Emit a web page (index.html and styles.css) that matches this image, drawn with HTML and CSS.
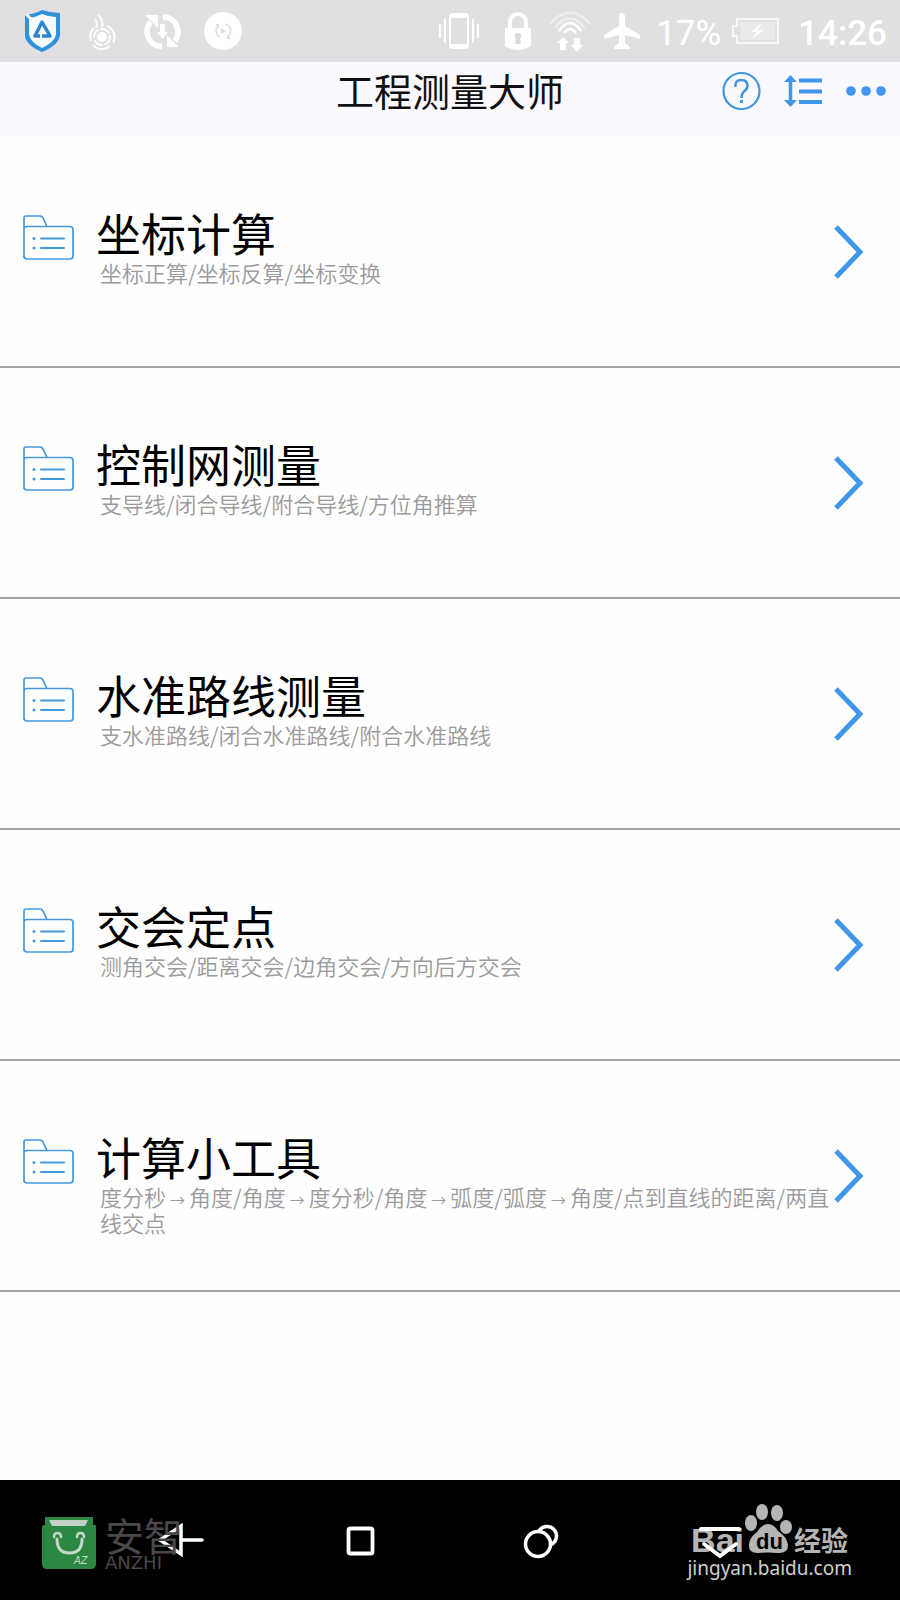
FILE: index.html
```html
<!DOCTYPE html>
<html lang="zh-CN">
<head>
  <meta charset="UTF-8">
  <meta name="viewport" content="width=device-width, initial-scale=1">
  <title>工程测量大师</title>
  <link rel="stylesheet" href="styles.css">
</head>
<body>
  <!-- shared icons -->
  <svg class="sprite" aria-hidden="true">
    <symbol id="folder" viewBox="0 0 52 46">
      <path d="M2 43V3q0-2 2-2h14q2 0 3 2l4 8.500H48q3 0 3 3V41q0 3-3 3H5q-3 0-3-3V14q0-2.500 3-2.500h20" fill="none" stroke="#4598dc" stroke-width="1.700"/>
      <path d="M19 23.500h23M19 33h23" stroke="#4598dc" stroke-width="2" stroke-linecap="round"/>
      <circle cx="12" cy="23.500" r="1.500" fill="#4598dc"/>
      <circle cx="12" cy="33" r="1.500" fill="#4598dc"/>
    </symbol>
    <symbol id="arrow" viewBox="0 0 30 54">
      <path d="M2 2L26 27L2 52" fill="none" stroke="#4096e8" stroke-width="5"/>
    </symbol>
  </svg>

  <div class="status-bar">
    <div class="status-left">
      <svg width="60" height="62" viewBox="0 0 60 62">
        <path d="M13 15Q23 14 30 10Q39 13 48 13V35Q47 45 30 52Q14 45 13 36Z" fill="#2f92dc"/>
        <path d="M17 18Q24 17 30 14Q37 17 44 17V34Q43 42 30 48Q18 42 17 34Z" fill="#f5fbff"/>
        <path d="M14 14l6 6" stroke="#f5fbff" stroke-width="3"/>
        <path d="M28 36H23L30 22L38 36H30" fill="none" stroke="#2f86cd" stroke-width="3.500" stroke-linejoin="round"/>
      </svg>
      <svg width="60" height="62" viewBox="0 0 60 62" fill="none" stroke="#fff" stroke-width="1.800">
        <circle cx="30" cy="37" r="4" fill="#fff"/>
        <circle cx="30" cy="37" r="8" stroke-dasharray="10 2"/>
        <path d="M22 28A12 12 0 0 0 19 41M21 45A12 12 0 0 0 38 46M41 43A12 12 0 0 0 35 26"/>
        <path d="M26 15Q32 20 30 27M23 19Q26 24 24 28"/>
      </svg>
      <svg width="60" height="62" viewBox="0 0 60 62" fill="none" stroke="#fff">
        <path d="M18.500 22A15 15 0 0 0 30 46.500M31 17A15 15 0 0 1 43 41" stroke-width="5.500"/>
        <path d="M13 15h13v13zM35 47V35l12 12z" fill="#fff" stroke="none"/>
        <path d="M30.500 24v9" stroke-width="5"/>
        <path d="M25 32h11l-5.500 7z" fill="#fff" stroke="none"/>
      </svg>
      <svg width="60" height="62" viewBox="0 0 60 62">
        <circle cx="31" cy="31" r="19" fill="#fff"/>
        <path d="M27 25A7 7 0 0 0 28 37M33 24A7 7 0 0 1 35 37" fill="none" stroke="#dedcdf" stroke-width="1.500"/>
        <path d="M29 28l5 3l-5 3zM23 24h4v4zM35 35v4h4z" fill="#dedcdf"/>
      </svg>
    </div>
    <div class="status-right">
      <svg width="44" height="62" viewBox="1 0 44 62" fill="none" stroke="#fff">
        <rect x="13" y="14" width="18" height="34" rx="3" stroke-width="2"/>
        <path d="M14 16h16M14 46h16" stroke-width="4"/>
        <path d="M3 24v14M8 19v24M36 19v24M41 24v14" stroke-width="2"/>
      </svg>
      <svg width="44" height="62" viewBox="0 0 44 62">
        <path d="M17 30V22a8 8 0 0 1 16 0v8" fill="none" stroke="#fff" stroke-width="4"/>
        <path d="M12 28h26v18q-13 8-26 0z" fill="#fff"/>
        <path d="M25 33a3 3 0 0 1 2 5.500l1 5.500h-6l1-5.500A3 3 0 0 1 25 33z" fill="#dcdadd"/>
      </svg>
      <svg width="44" height="62" viewBox="0 0 44 62" fill="none" stroke="#fff">
        <path d="M2 24Q22 1 42 24M7 28Q22 9 37 28" stroke-width="2.500" opacity=".45"/>
        <path d="M11 31Q22 15 33 31M16 33Q22 25 28 33" stroke-width="2.500"/>
        <path d="M15 37l6 6h-3v7h-6v-7H9zM29 52l-6-7h3v-7h6v7h3z" fill="#fff" stroke="none"/>
      </svg>
      <svg width="38" height="62" viewBox="0 0 38 62">
        <path d="M19 13q3 0 3 4v9l15 9v4l-15-4v8l5 4v2H11v-2l5-4v-8L1 39v-4l15-9v-9q0-4 3-4z" fill="#fff"/>
      </svg>
      <span class="battery-text">17%</span>
      <svg width="47" height="62" viewBox="1 0 47 62">
        <path d="M6 19H47V43H6V36H2V26H6Z" fill="none" stroke="#fff" stroke-width="1.500"/>
        <rect x="9" y="22" width="35" height="18" fill="#ebe9ec"/>
        <path d="M30 23L20 32h6l-5 7L33 30h-6z" fill="#fff"/>
      </svg>
      <span class="clock">14:26</span>
    </div>
  </div>

  <header class="header">
    <h1>工程测量大师</h1>
    <div class="actions">
      <button type="button" aria-label="帮助">
        <svg width="40" height="40" viewBox="0 0 40 40" fill="none" stroke="#4096e0">
          <circle cx="19.500" cy="20" r="18" stroke-width="2.200"/>
          <path d="M13.500 16Q12.500 9 19.500 9Q25.500 9 25.500 15Q25.500 18 21.500 21Q19.500 23 19.500 27" stroke-width="2.500"/>
          <path d="M19.500 29v3" stroke-width="3"/>
        </svg>
      </button>
      <button type="button" aria-label="排序">
        <svg width="40" height="40" viewBox="0 0 40 40">
          <path d="M6.500 8v24" stroke="#4096e8" stroke-width="3.500"/>
          <path d="M6.500 4l6.500 7H0zM6.500 36l6.500-7H0z" fill="#4096e8"/>
          <path d="M15 9.500h23M15 20.500h23M15 31h23" stroke="#4096e8" stroke-width="4"/>
        </svg>
      </button>
      <button type="button" aria-label="更多">
        <svg width="40" height="40" viewBox="0 0 40 40" fill="#4096f0">
          <circle cx="5" cy="20" r="4.800"/>
          <circle cx="20" cy="20" r="4.800"/>
          <circle cx="35" cy="20" r="4.800"/>
        </svg>
      </button>
    </div>
  </header>

  <main class="list">
    <a class="item" href="#zuobiao">
      <svg class="folder"><use href="#folder"/></svg>
      <div class="text">
        <h2>坐标计算</h2>
        <p>坐标正算/坐标反算/坐标变换</p>
      </div>
      <svg class="arrow"><use href="#arrow"/></svg>
    </a>
    <a class="item" href="#kongzhi">
      <svg class="folder"><use href="#folder"/></svg>
      <div class="text">
        <h2>控制网测量</h2>
        <p>支导线/闭合导线/附合导线/方位角推算</p>
      </div>
      <svg class="arrow"><use href="#arrow"/></svg>
    </a>
    <a class="item" href="#shuizhun">
      <svg class="folder"><use href="#folder"/></svg>
      <div class="text">
        <h2>水准路线测量</h2>
        <p>支水准路线/闭合水准路线/附合水准路线</p>
      </div>
      <svg class="arrow"><use href="#arrow"/></svg>
    </a>
    <a class="item" href="#jiaohui">
      <svg class="folder"><use href="#folder"/></svg>
      <div class="text">
        <h2>交会定点</h2>
        <p>测角交会/距离交会/边角交会/方向后方交会</p>
      </div>
      <svg class="arrow"><use href="#arrow"/></svg>
    </a>
    <a class="item" href="#gongju">
      <svg class="folder"><use href="#folder"/></svg>
      <div class="text">
        <h2>计算小工具</h2>
        <p>度分秒<span class="to">→</span>角度/角度<span class="to">→</span>度分秒/角度<span class="to">→</span>弧度/弧度<span class="to">→</span>角度/点到直线的距离/两直线交点</p>
      </div>
      <svg class="arrow"><use href="#arrow"/></svg>
    </a>
  </main>

  <nav class="nav-bar">
    <button type="button" aria-label="返回">
      <svg width="48" height="40" viewBox="0 0 48 40" fill="none" stroke="#fff" stroke-width="3.500">
        <path d="M4 20L25 6V34Z"/>
        <path d="M25 20h21" stroke-linecap="round"/>
      </svg>
    </button>
    <button type="button" aria-label="主页">
      <svg width="40" height="40" viewBox="0 0 40 40">
        <rect x="8.500" y="8.500" width="24" height="25" rx="2" fill="none" stroke="#fff" stroke-width="3.800"/>
      </svg>
    </button>
    <button type="button" aria-label="最近任务">
      <svg width="40" height="40" viewBox="0 0 40 40" stroke="#fff" stroke-width="3.500">
        <circle cx="27" cy="16" r="9.500"/>
        <circle cx="18" cy="24" r="12.500"/>
      </svg>
    </button>
    <button type="button" class="collapse" aria-label="收起">
      <svg width="44" height="40" viewBox="0 0 44 40" fill="none" stroke="#fff" stroke-width="4" stroke-linecap="round">
        <path d="M3 9h38M6 24l16 12l16-12"/>
      </svg>
    </button>

    <div class="anzhi">
      <svg width="56" height="54" viewBox="0 0 56 54">
        <path d="M4 1h48v8h2q1 0 1 2v37q0 5-5 5H6q-5 0-5-5V11q0-2 2-2h1z" fill="#2b8742"/>
        <path d="M8 4h39l-3 6H11z" fill="#c3d0c5"/>
        <g fill="none" stroke="#c3d8c8" stroke-linecap="round">
          <path d="M16 23q0 14 12.500 14T41 23" stroke-width="3"/>
          <path d="M13 21q0-4 3.500-4t3.500 4M36 21q0-4 3.500-4t3.500 4" stroke-width="2.500"/>
        </g>
        <text class="anzhi-az" x="33" y="48">AZ</text>
      </svg>
      <div class="anzhi-name">
        <span class="anzhi-cn">安智</span>
        <span class="anzhi-en">ANZHI</span>
      </div>
    </div>

    <div class="baidu">
      <div class="baidu-top">
        <span class="baidu-latin">Bai</span>
        <svg width="48" height="52" viewBox="0 0 48 52" fill="#b5b5b5">
          <ellipse cx="7" cy="20" rx="6" ry="8"/>
          <ellipse cx="18" cy="9" rx="6" ry="8"/>
          <ellipse cx="33" cy="10" rx="6" ry="8"/>
          <ellipse cx="42" cy="24" rx="6" ry="7"/>
          <path d="M24 21q6 0 10 7q9 6 10 14q0 9-11 8q-9-1-18 0Q4 51 5 41q1-7 8-12q5-8 11-8z"/>
          <text class="baidu-du" x="12" y="46">du</text>
        </svg>
        <span class="baidu-cn">经验</span>
      </div>
      <span class="baidu-url">jingyan.baidu.com</span>
    </div>
  </nav>
</body>
</html>
```
FILE: styles.css
```css
* { box-sizing: border-box; }
body { margin: 0; min-height: 100vh; display: flex; flex-direction: column; background: #fefefe; font-family: "Noto Sans CJK SC", sans-serif; }
h1, h2, p { margin: 0; font-weight: normal; }
svg { display: block; flex: none; }
button { padding: 0; border: none; background: none; cursor: pointer; }
.sprite { position: absolute; width: 0; height: 0; }

/* status bar */
.status-bar { display: flex; justify-content: space-between; height: 62px; padding: 0 13px 0 12px; background: #e1dfe2; color: #fff; font-family: Roboto, sans-serif; font-size: 35px; }
.status-left { display: flex; }
.status-right { display: flex; gap: 11px; line-height: 62px; }
.battery-text { padding: 3px 0 0 4px; }
.clock { padding: 3px 0 0 8px; font-weight: 500; }

/* title bar */
.header { display: grid; grid-template-columns: 1fr auto 1fr; align-items: start; height: 74px; padding: 9px 14px 0; background: #fbf9fd; }
.header h1 { grid-column: 2; font-size: 38px; line-height: 38px; color: #111; }
.actions { display: flex; justify-content: flex-end; gap: 22px; }

/* list */
.list { flex: 1; padding-top: 1px; }
.item { display: flex; height: 231px; padding: 70px 36px 0 22px; border-bottom: 2px solid #a5a5a5; color: #000; text-decoration: none; }
.folder { width: 52px; height: 46px; margin-top: 8px; }
.text { flex: 1; padding-left: 22px; }
.text h2 { font-size: 45px; line-height: 52px; }
.text p { padding-left: 4px; font-size: 22px; font-weight: 350; line-height: 26px; color: #9c9a9c; }
.to { padding: 0 4px; font-size: 15px; line-height: 1; }
.arrow { width: 30px; height: 54px; margin-top: 18px; }

/* navigation bar */
.nav-bar { position: relative; display: grid; grid-template-columns: repeat(4, 1fr); height: 120px; padding: 0 10%; background: #000; }
.nav-bar button { display: flex; align-items: center; justify-content: center; }
.nav-bar .collapse { position: relative; z-index: 1; }

.anzhi { position: absolute; left: 41px; top: 36px; display: flex; gap: 8px; color: #4b4749; }
.anzhi-az { font: italic 10px "DejaVu Sans", sans-serif; fill: #c3d8c8; }
.anzhi-name { display: flex; flex-direction: column; }
.anzhi-cn { font-size: 39px; line-height: 36px; }
.anzhi-en { font: 18px/22px "DejaVu Sans", sans-serif; }

.baidu { position: absolute; right: 48px; top: 23px; color: #b5b5b5; }
.baidu-top { display: flex; align-items: flex-end; justify-content: flex-end; padding-right: 4px; }
.baidu-latin { font: bold 34px/30px "Liberation Sans", sans-serif; }
.baidu-du { font: bold 22px "Liberation Sans", sans-serif; fill: #000; }
.baidu-cn { padding-left: 2px; font-size: 27px; line-height: 30px; font-weight: bold; }
.baidu-url { display: block; font: 19px/26px "Noto Sans", sans-serif; color: #d0d0d0; }
```
